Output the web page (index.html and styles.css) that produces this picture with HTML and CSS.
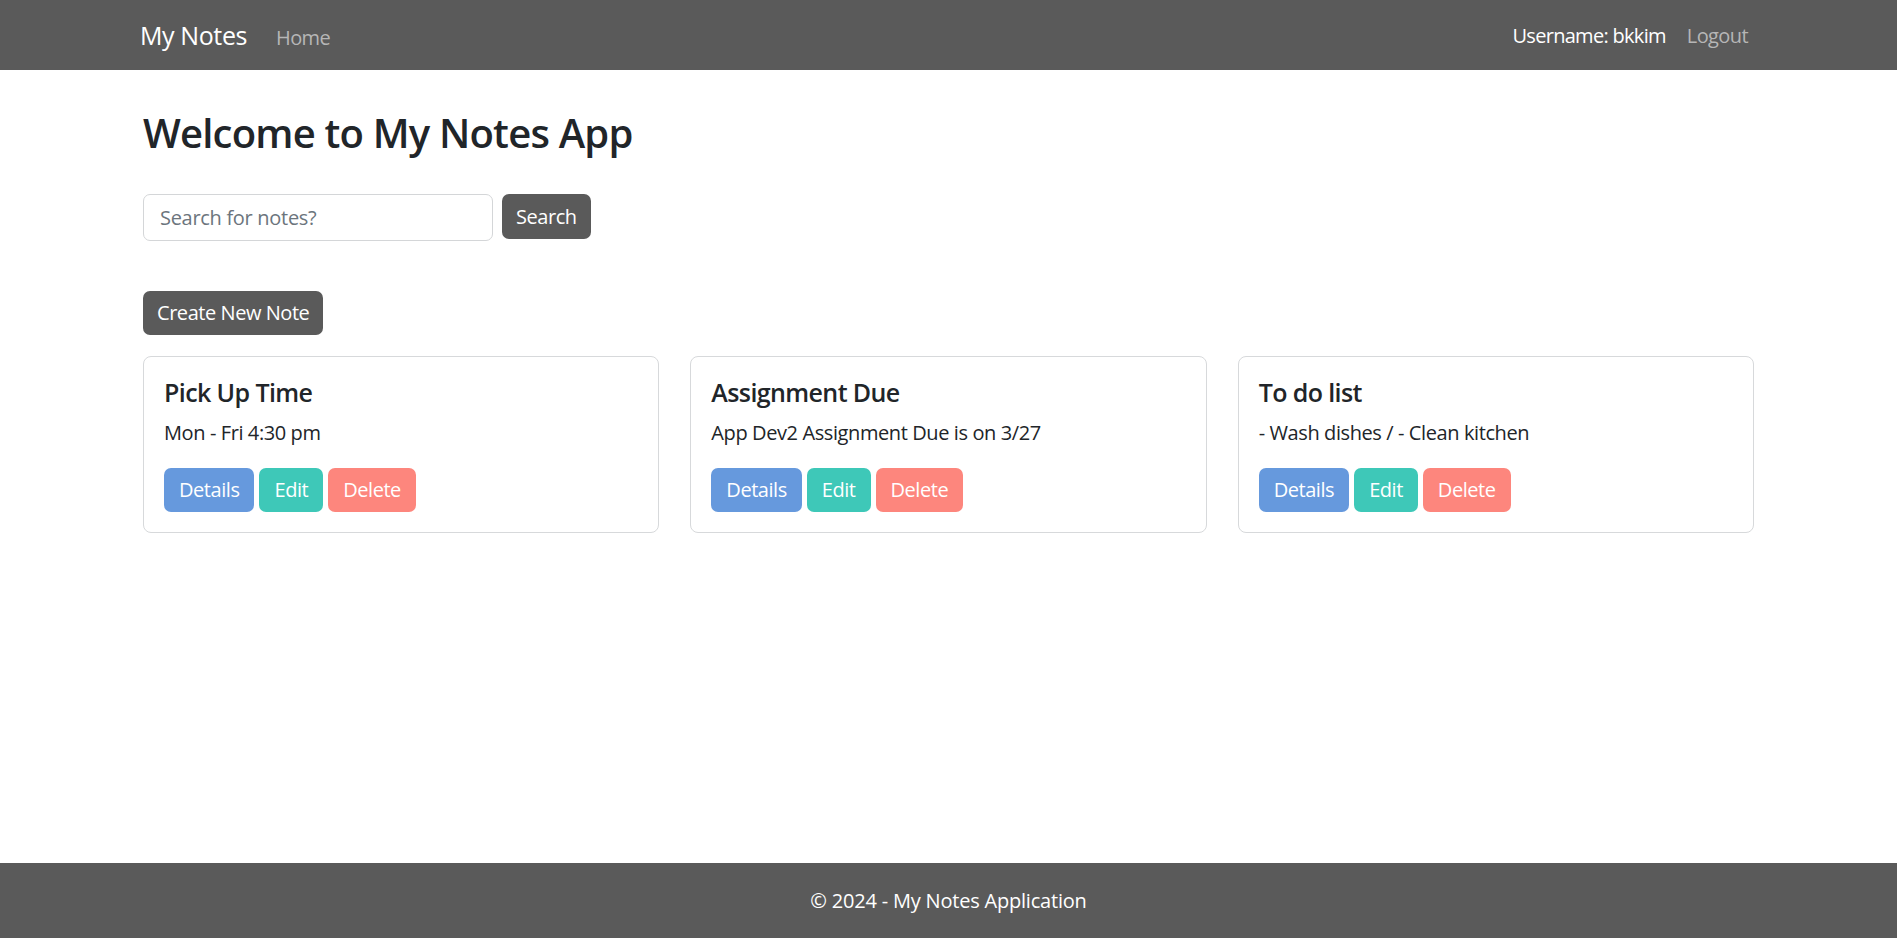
FILE: index.html
```html
<!DOCTYPE html>
<html lang="en">
<head>
<meta charset="utf-8">
<title>My Notes</title>
<link rel="stylesheet" href="styles.css">
</head>
<body>
<header class="navbar">
  <div class="container nav-inner">
    <div class="nav-left">
      <a class="brand" href="#">My Notes</a>
      <a class="nav-link" href="#">Home</a>
    </div>
    <div class="nav-right">
      <span class="user">Username: bkkim</span>
      <a class="nav-link" href="#">Logout</a>
    </div>
  </div>
</header>
<main class="main">
  <div class="container">
    <h1 class="title">Welcome to My Notes App</h1>
    <form class="search">
      <input class="search-input" type="text" placeholder="Search for notes?">
      <button class="btn btn-dark" type="button">Search</button>
    </form>
    <button class="btn btn-dark create" type="button">Create New Note</button>
    <div class="cards">
      <div class="card">
        <h5 class="card-title">Pick Up Time</h5>
        <p class="card-text">Mon - Fri 4:30 pm</p>
        <div class="actions">
          <button class="btn btn-blue" type="button">Details</button>
          <button class="btn btn-teal" type="button">Edit</button>
          <button class="btn btn-red" type="button">Delete</button>
        </div>
      </div>
      <div class="card">
        <h5 class="card-title">Assignment Due</h5>
        <p class="card-text">App Dev2 Assignment Due is on 3/27</p>
        <div class="actions">
          <button class="btn btn-blue" type="button">Details</button>
          <button class="btn btn-teal" type="button">Edit</button>
          <button class="btn btn-red" type="button">Delete</button>
        </div>
      </div>
      <div class="card">
        <h5 class="card-title">To do list</h5>
        <p class="card-text">- Wash dishes / - Clean kitchen</p>
        <div class="actions">
          <button class="btn btn-blue" type="button">Details</button>
          <button class="btn btn-teal" type="button">Edit</button>
          <button class="btn btn-red" type="button">Delete</button>
        </div>
      </div>
    </div>
  </div>
</main>
<footer class="footer">© 2024 - My Notes Application</footer>
</body>
</html>
```
FILE: styles.css
```css
* { box-sizing: border-box; }
html, body { margin: 0; padding: 0; }
body {
  font-family: "Open Sans", "Noto Sans", sans-serif;
  font-size: 20px;
  line-height: 1.5;
  color: #212529;
  background: #fff;
  min-height: 100vh;
  display: flex;
  flex-direction: column;
}
.container {
  width: 1611px;
  margin: 0 auto;
}
.navbar {
  background: #5a5a5a;
  height: 70px;
  display: flex;
  align-items: center;
  padding-top: 1px;
}
.nav-inner {
  display: flex;
  justify-content: space-between;
  align-items: center;
  padding-right: 6px;
}
.nav-left, .nav-right {
  display: flex;
  align-items: baseline;
}
.brand {
  color: #fff;
  text-decoration: none;
  font-size: 25px;
  letter-spacing: -0.4px;
  margin-left: -3px;
  margin-right: 29px;
}
.nav-link {
  color: #b6b6b6;
  text-decoration: none;
  font-size: 20px;
  letter-spacing: -0.6px;
}
.user {
  color: #fff;
  letter-spacing: -0.7px;
  margin-right: 21px;
}
.main {
  flex: 1;
}
.title {
  font-size: 40px;
  font-weight: 600;
  line-height: 1.2;
  margin: 39px 0 37px;
  letter-spacing: -0.8px;
}
.search {
  display: flex;
  align-items: flex-start;
  gap: 9px;
  margin: 0 0 50px;
}
.search-input {
  width: 350px;
  height: 47px;
  border: 1px solid #d4d6d8;
  border-radius: 7px;
  padding: 0 16px;
  font-family: inherit;
  font-size: 20px;
  letter-spacing: -0.3px;
  color: #212529;
}
.search-input::placeholder { color: #6c757d; }
.btn {
  font-family: inherit;
  font-size: 20px;
  line-height: 30px;
  letter-spacing: -0.45px;
  padding: 7px 15px;
  border: 0;
  border-radius: 7px;
  color: #fff;
  cursor: pointer;
}
.btn-dark { background: #5a5a5a; height: 45px; }
.search .btn-dark { padding: 7px 14px; }
.create { height: 44px; padding: 7px 14px; display: block; margin-bottom: 21px; }
.cards {
  display: grid;
  grid-template-columns: repeat(3, 1fr);
  gap: 31px;
}
.card {
  border: 1px solid #d7d9db;
  border-radius: 8px;
  padding: 20px;
}
.card-title {
  font-size: 25px;
  font-weight: 600;
  line-height: 1.2;
  letter-spacing: -0.6px;
  margin: 0 0 11px;
}
.card-text {
  margin: 0 0 20px;
  letter-spacing: -0.4px;
}
.actions {
  display: flex;
  gap: 5px;
}
.btn-blue { background: #6699dd; }
.btn-teal { background: #3ec8b8; }
.btn-red { background: #fd867d; }
.footer {
  background: #5a5a5a;
  color: #fff;
  height: 75px;
  display: flex;
  align-items: center;
  justify-content: center;
  font-size: 20px;
  letter-spacing: -0.2px;
}
```
